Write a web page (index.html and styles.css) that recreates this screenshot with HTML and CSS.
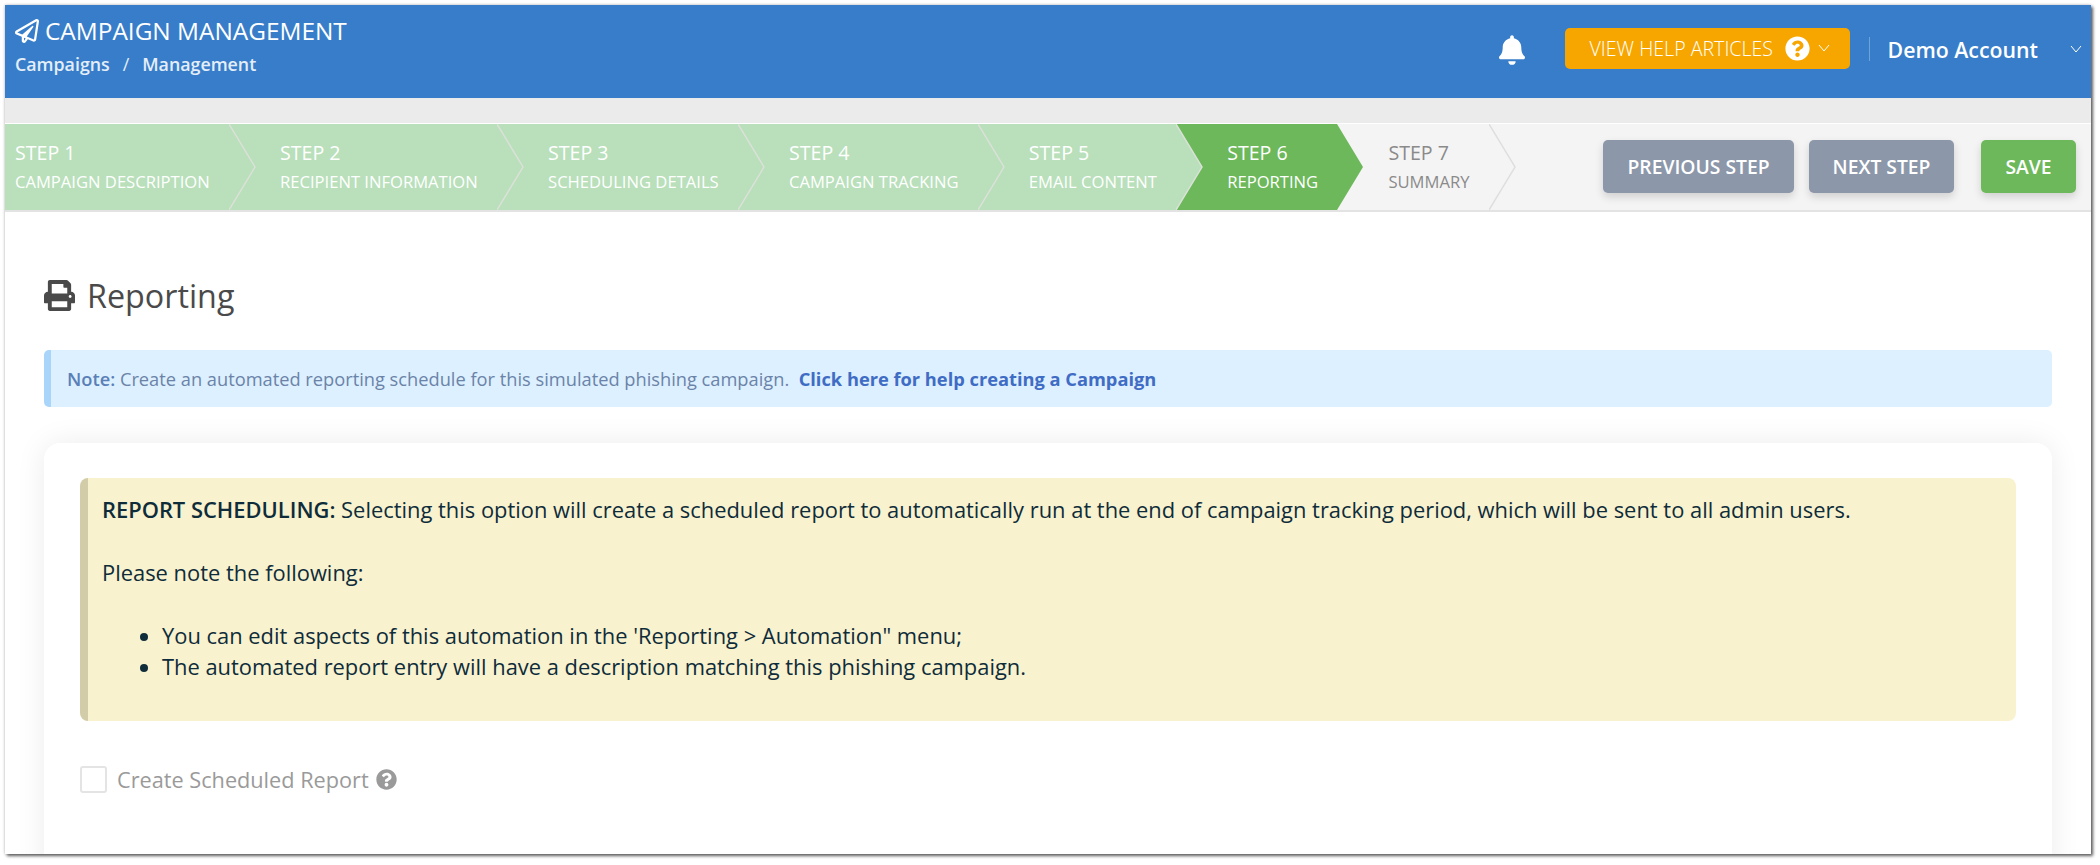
FILE: index.html
```html
<!DOCTYPE html>
<html lang="en">
<head>
    <meta charset="UTF-8">
    <title>Campaign Management</title>
    <link rel="stylesheet" href="styles.css">
</head>
<body>
    <div class="frame">
        <header class="topbar">
            <div class="crumbs">
                <div class="page-title">
                    <svg class="plane" viewBox="0 0 512 512"><path d="M440 6.5L24 246.4c-34.4 19.9-31.1 70.8 5.7 85.9L144 379.6V464c0 46.4 59.2 65.5 86.6 28.6l43.8-59.1 111.9 46.2c5.9 2.4 12.1 3.6 18.3 3.6 8.2 0 16.3-2.1 23.6-6.2 12.8-7.2 21.6-20 23.9-34.5l59.4-387.2c6.1-40.1-36.9-68.8-71.5-48.9zM192 464v-64.6l36.6 15.1L192 464zm212.6-28.7l-153.8-63.5L391 169.5c10.7-15.5-9.5-33.5-23.7-21.2L155.8 332.6 48 288 464 48l-59.4 387.3z"/></svg>
                    <span>CAMPAIGN MANAGEMENT</span>
                </div>
                <div class="breadcrumb"><span>Campaigns</span><span class="slash">/</span><span>Management</span></div>
            </div>
            <div class="top-right">
                <svg class="bell" viewBox="0 0 448 512"><path d="M224 512c35.32 0 63.97-28.65 63.97-64H160.03c0 35.35 28.65 64 63.97 64zm215.39-149.71c-19.32-20.76-55.47-51.99-55.47-154.29 0-77.7-54.48-139.9-127.94-155.16V32c0-17.67-14.32-32-31.98-32s-31.98 14.33-31.98 32v20.84C118.56 68.1 64.08 130.3 64.08 208c0 102.3-36.15 133.53-55.47 154.29-6 6.45-8.66 14.16-8.61 21.71.11 16.4 12.98 32 32.1 32h383.8c19.12 0 32-15.6 32.1-32 .05-7.55-2.61-15.27-8.61-21.71z"/></svg>
                <button class="help-btn">
                    <span>VIEW HELP ARTICLES</span>
                    <svg class="help-icon" viewBox="0 0 512 512"><path d="M504 256c0 136.997-111.043 248-248 248S8 392.997 8 256C8 119.083 119.043 8 256 8s248 111.083 248 248zM262.655 90c-54.497 0-89.255 22.957-116.549 63.758-3.536 5.286-2.353 12.415 2.715 16.258l34.699 26.31c5.205 3.947 12.621 3.008 16.665-2.122 17.864-22.658 30.113-35.797 57.303-35.797 20.429 0 45.698 13.148 45.698 32.958 0 14.976-12.363 22.667-32.534 33.976C247.128 238.528 216 254.941 216 296v4c0 6.627 5.373 12 12 12h56c6.627 0 12-5.373 12-12v-1.333c0-28.462 83.186-29.647 83.186-106.667 0-58.002-60.165-102-116.531-102zM256 338c-25.365 0-46 20.635-46 46 0 25.364 20.635 46 46 46s46-20.636 46-46c0-25.365-20.635-46-46-46z"/></svg>
                    <svg class="chev" viewBox="0 0 12 8"><path d="M1 1l5 6 5-6"/></svg>
                </button>
                <div class="account">
                    <span>Demo Account</span>
                    <svg class="chev" viewBox="0 0 12 8"><path d="M1 1l5 6 5-6"/></svg>
                </div>
            </div>
        </header>
        <div class="band"></div>

        <nav class="stepper">
            <div class="steps">
                <div class="step done">
                    <div class="step-num">STEP 1</div>
                    <div class="step-name">CAMPAIGN DESCRIPTION</div>
                    <svg class="step-arrow" viewBox="0 0 27 88" preserveAspectRatio="none"><path d="M0 0L26 44L0 88"/></svg>
                </div>
                <div class="step done">
                    <div class="step-num">STEP 2</div>
                    <div class="step-name">RECIPIENT INFORMATION</div>
                    <svg class="step-arrow" viewBox="0 0 27 88" preserveAspectRatio="none"><path d="M0 0L26 44L0 88"/></svg>
                </div>
                <div class="step done">
                    <div class="step-num">STEP 3</div>
                    <div class="step-name">SCHEDULING DETAILS</div>
                    <svg class="step-arrow" viewBox="0 0 27 88" preserveAspectRatio="none"><path d="M0 0L26 44L0 88"/></svg>
                </div>
                <div class="step done">
                    <div class="step-num">STEP 4</div>
                    <div class="step-name">CAMPAIGN TRACKING</div>
                    <svg class="step-arrow" viewBox="0 0 27 88" preserveAspectRatio="none"><path d="M0 0L26 44L0 88"/></svg>
                </div>
                <div class="step done">
                    <div class="step-num">STEP 5</div>
                    <div class="step-name">EMAIL CONTENT</div>
                    <svg class="step-arrow" viewBox="0 0 27 88" preserveAspectRatio="none"><path d="M0 0L26 44L0 88"/></svg>
                </div>
                <div class="step active">
                    <div class="step-num">STEP 6</div>
                    <div class="step-name">REPORTING</div>
                    <svg class="step-arrow" viewBox="0 0 27 88" preserveAspectRatio="none"><path d="M0 0L26 44L0 88"/></svg>
                </div>
                <div class="step todo">
                    <div class="step-num">STEP 7</div>
                    <div class="step-name">SUMMARY</div>
                    <svg class="step-arrow" viewBox="0 0 27 88" preserveAspectRatio="none"><path d="M0 0L26 44L0 88"/></svg>
                </div>
            </div>
            <div class="step-btns">
                <button class="btn grey prev">PREVIOUS STEP</button>
                <button class="btn grey next">NEXT STEP</button>
                <button class="btn green">SAVE</button>
            </div>
        </nav>

        <main class="content">
            <h1 class="heading">
                <svg class="print" viewBox="0 0 512 512"><path d="M448 192V77.25c0-8.49-3.37-16.62-9.37-22.63L393.37 9.37c-6-6-14.14-9.37-22.63-9.37H96C78.33 0 64 14.33 64 32v160c-35.35 0-64 28.65-64 64v112c0 8.84 7.16 16 16 16h48v96c0 17.67 14.33 32 32 32h320c17.67 0 32-14.33 32-32v-96h48c8.84 0 16-7.16 16-16V256c0-35.35-28.65-64-64-64zm-64 256H128v-96h256v96zm0-224H128V64h192v48c0 8.84 7.16 16 16 16h48v96zm48 72c-13.25 0-24-10.75-24-24 0-13.26 10.75-24 24-24s24 10.74 24 24c0 13.25-10.75 24-24 24z"/></svg>
                <span>Reporting</span>
            </h1>
            <div class="note">
                <b>Note:</b> Create an automated reporting schedule for this simulated phishing campaign. &nbsp;<a href="#">Click here for help creating a Campaign</a>
            </div>
            <section class="card">
                <div class="warn">
                    <p><b>REPORT SCHEDULING:</b> Selecting this option will create a scheduled report to automatically run at the end of campaign tracking period, which will be sent to all admin users.</p>
                    <p>Please note the following:</p>
                    <ul>
                        <li>You can edit aspects of this automation in the 'Reporting &gt; Automation" menu;</li>
                        <li>The automated report entry will have a description matching this phishing campaign.</li>
                    </ul>
                </div>
                <label class="check">
                    <span class="box"></span>
                    <span>Create Scheduled Report</span>
                    <svg class="check-help" viewBox="0 0 512 512"><path d="M504 256c0 136.997-111.043 248-248 248S8 392.997 8 256C8 119.083 119.043 8 256 8s248 111.083 248 248zM262.655 90c-54.497 0-89.255 22.957-116.549 63.758-3.536 5.286-2.353 12.415 2.715 16.258l34.699 26.31c5.205 3.947 12.621 3.008 16.665-2.122 17.864-22.658 30.113-35.797 57.303-35.797 20.429 0 45.698 13.148 45.698 32.958 0 14.976-12.363 22.667-32.534 33.976C247.128 238.528 216 254.941 216 296v4c0 6.627 5.373 12 12 12h56c6.627 0 12-5.373 12-12v-1.333c0-28.462 83.186-29.647 83.186-106.667 0-58.002-60.165-102-116.531-102zM256 338c-25.365 0-46 20.635-46 46 0 25.364 20.635 46 46 46s46-20.636 46-46c0-25.365-20.635-46-46-46z"/></svg>
                </label>
            </section>
        </main>
    </div>
</body>
</html>
```

FILE: styles.css
```css
html, body{
    margin: 0;
    height: 100%;
    overflow: hidden;
    background: #fff;
}
body{
    padding: 5px 9px 11px 5px;
    box-sizing: border-box;
    font-family: "Open Sans", sans-serif;
}
.frame{
    height: 849px;
    overflow: hidden;
    background: #fff;
    box-shadow: 2px 2px 3px rgba(0,0,0,.6), 0 0 3px rgba(0,0,0,.25);
    display: flex;
    flex-direction: column;
}

/* top bar */
.topbar{
    height: 93px;
    flex: none;
    background: #377dc9;
    color: #fff;
    display: flex;
    justify-content: space-between;
    padding: 0 9px 0 10px;
}
.page-title{
    display: flex;
    align-items: center;
    gap: 6px;
    margin-top: 13px;
    font-size: 24.4px;
    line-height: 26px;
}
.plane{
    width: 24px;
    height: 24px;
    fill: #fff;
}
.breadcrumb{
    display: flex;
    gap: 13px;
    margin-top: 8px;
    font-size: 17.8px;
    line-height: 24px;
    font-weight: 600;
    color: #e4eef8;
}
.slash{
    font-weight: 400;
}
.top-right{
    display: flex;
    align-items: center;
    padding-bottom: 7px;
}
.bell{
    width: 26px;
    height: 30px;
    fill: #fff;
    margin: 4px 40px 0 0;
}
.help-btn{
    width: 285px;
    height: 41px;
    border: 0;
    border-radius: 5px;
    background: #f7a600;
    color: #fff;
    font: 300 19.6px "Open Sans", sans-serif;
    display: flex;
    align-items: center;
    padding: 0 0 0 25px;
}
.help-icon{
    width: 25px;
    height: 25px;
    fill: #fff;
    margin: 0 8px 0 12px;
}
.chev{
    width: 12px;
    height: 8px;
    fill: none;
    stroke: #fff;
    stroke-width: 1;
}
.account{
    display: flex;
    align-items: center;
    margin: 2px 0 0 19px;
    padding-left: 18px;
    border-left: 1px solid #6da2da;
    height: 24px;
    font-size: 21.3px;
    font-weight: 600;
    gap: 32px;
}
.band{
    height: 25px;
    flex: none;
    background: #ebebeb;
}

/* stepper */
.stepper{
    height: 89px;
    box-sizing: border-box;
    flex: none;
    display: flex;
    justify-content: space-between;
    align-items: center;
    padding-right: 15px;
    background: #f4f4f4;
    border-top: 1px solid #fff;
    border-bottom: 2px solid #e3e3e3;
}
.steps{
    display: flex;
    align-self: stretch;
}
.step{
    position: relative;
    padding: 0 19.3px 0 51px;
    display: flex;
    flex-direction: column;
    justify-content: center;
    color: #fff;
}
.step:first-child{
    padding-left: 10px;
}
.step-num{
    font-size: 19.6px;
    line-height: 24px;
    font-weight: 500;
    margin-bottom: 5px;
}
.step-name{
    font-size: 16.6px;
    line-height: 24px;
    white-space: nowrap;
}
.step-arrow{
    position: absolute;
    left: 100%;
    top: 0;
    width: 27px;
    height: 100%;
    z-index: 1;
    stroke-width: 1.5;
}
.done{
    background: #b9dfbb;
}
.done .step-arrow{
    fill: #b9dfbb;
    stroke: #dbe1d8;
}
.active{
    background: #6cb85b;
}
.active .step-arrow{
    fill: #6cb85b;
    stroke: none;
}
.todo{
    color: #8a8a8a;
}
.todo .step-arrow{
    fill: #f4f4f4;
    stroke: #dedede;
}
.step-btns{
    display: flex;
    align-items: center;
    padding-bottom: 1px;
}
.btn{
    height: 53px;
    border: 0;
    border-radius: 5px;
    color: #fff;
    font: 600 19.3px "Open Sans", sans-serif;
    box-shadow: 0 4px 8px rgba(0,0,0,.15);
    padding: 0;
}
.grey{
    background: #8c97aa;
}
.green{
    background: #6cb85b;
    width: 95px;
    margin-left: 27px;
}
.prev{
    width: 191px;
    margin-right: 15px;
}
.next{
    width: 145px;
}

/* content */
.content{
    padding: 0 39px;
}
.heading{
    display: flex;
    align-items: center;
    gap: 12px;
    margin: 65px 0 37px;
    font-size: 32.3px;
    line-height: 36px;
    font-weight: 400;
    color: #4a4a4a;
}
.print{
    width: 31px;
    height: 31px;
    fill: #4a4a4a;
}
.note{
    height: 57px;
    box-sizing: border-box;
    padding-left: 16px;
    border-left: 7px solid #a9d5fb;
    border-radius: 5px;
    background: #ddf0ff;
    font-size: 18.25px;
    line-height: 57px;
    color: #6b83a8;
}
.note b{
    color: #5a80b8;
    font-weight: 600;
}
.note a{
    color: #3f6cc4;
    font-weight: 700;
    text-decoration: none;
}
.card{
    margin-top: 36px;
    padding: 35px 36px;
    height: 420px;
    border-radius: 16px;
    background: #fff;
    box-shadow: 0 0 30px rgba(0,0,0,.08);
}
.warn{
    height: 243px;
    box-sizing: border-box;
    padding: 15.5px 14px;
    border-left: 8px solid #d2cca9;
    border-radius: 8px;
    background: #f9f2ce;
    font-size: 21.9px;
    line-height: 31px;
    color: #0e2c3a;
}
.warn b{
    font-weight: 600;
}
.warn p{
    margin: 0 0 32px;
}
.warn ul{
    margin: 0;
    padding-left: 60px;
}
.check{
    display: flex;
    align-items: center;
    margin-top: 44px;
    font-size: 21.7px;
    color: #9a9a9a;
}
.box{
    width: 23px;
    height: 23px;
    border: 2px solid #e4e4e4;
    border-radius: 3px;
    margin-right: 10px;
}
.check-help{
    width: 21px;
    height: 21px;
    margin-left: 7px;
    fill: #9a9a9a;
}
```
